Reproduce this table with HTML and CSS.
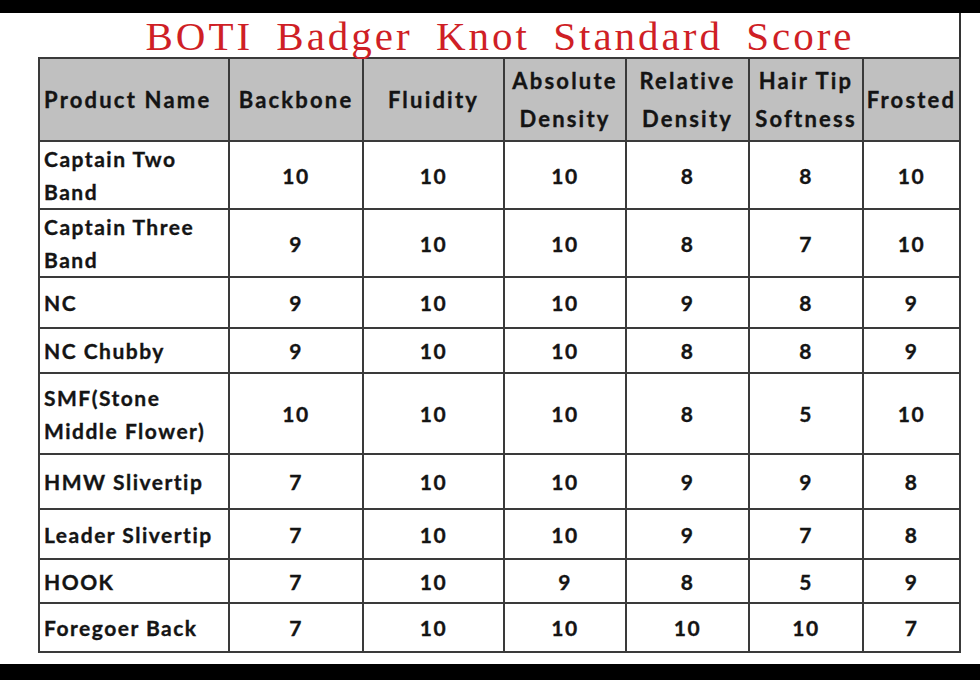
FILE: index.html
```html
<!DOCTYPE html>
<html>
<head>
<meta charset="utf-8">
<link rel="stylesheet" href="styles.css">
</head>
<body>
<div class="topbar"></div>
<div class="sheet">
  <div class="title"><span class="title-text">BOTI Badger Knot Standard Score</span></div>
  <table class="score">
    <colgroup>
      <col class="c-name"><col class="c-back"><col class="c-flu"><col class="c-abs"><col class="c-rel"><col class="c-hair"><col class="c-fro">
    </colgroup>
    <thead>
      <tr class="r-head">
        <th class="name">Product Name</th>
        <th>Backbone</th>
        <th>Fluidity</th>
        <th class="two">Absolute<br>Density</th>
        <th class="two">Relative<br>Density</th>
        <th class="two">Hair Tip<br>Softness</th>
        <th>Frosted</th>
      </tr>
    </thead>
    <tbody>
      <tr class="r68"><td class="name two">Captain Two<br>Band</td><td>10</td><td>10</td><td>10</td><td>8</td><td>8</td><td>10</td></tr>
      <tr class="r68"><td class="name two">Captain Three<br>Band</td><td>9</td><td>10</td><td>10</td><td>8</td><td>7</td><td>10</td></tr>
      <tr class="r51"><td class="name">NC</td><td>9</td><td>10</td><td>10</td><td>9</td><td>8</td><td>9</td></tr>
      <tr class="r45"><td class="name">NC Chubby</td><td>9</td><td>10</td><td>10</td><td>8</td><td>8</td><td>9</td></tr>
      <tr class="r81"><td class="name two">SMF(Stone<br>Middle Flower)</td><td>10</td><td>10</td><td>10</td><td>8</td><td>5</td><td>10</td></tr>
      <tr class="r55"><td class="name">HMW Slivertip</td><td>7</td><td>10</td><td>10</td><td>9</td><td>9</td><td>8</td></tr>
      <tr class="r50"><td class="name">Leader Slivertip</td><td>7</td><td>10</td><td>10</td><td>9</td><td>7</td><td>8</td></tr>
      <tr class="r44"><td class="name">HOOK</td><td>7</td><td>10</td><td>9</td><td>8</td><td>5</td><td>9</td></tr>
      <tr class="r49"><td class="name">Foregoer Back</td><td>7</td><td>10</td><td>10</td><td>10</td><td>10</td><td>7</td></tr>
    </tbody>
  </table>
</div>
<div class="bottombar"></div>
</body>
</html>
```

FILE: styles.css
```css
html, body {
  margin: 0;
  padding: 0;
  background: #ffffff;
  width: 980px;
  height: 680px;
  overflow: hidden;
}
body {
  display: flex;
  flex-direction: column;
}
.topbar {
  height: 13px;
  background: #000;
  flex: none;
}
.bottombar {
  height: 16px;
  background: #000;
  flex: none;
  margin-top: auto;
}
.sheet {
  padding-left: 38px;
  flex: none;
}
.title {
  box-sizing: border-box;
  width: 923px;
  height: 44px;
  padding-left: 3px;
  border-right: 2px solid #333;
  text-align: center;
  font-family: "Liberation Serif", serif;
  font-size: 41px;
  line-height: 46px;
  color: #cf1f26;
  white-space: nowrap;
}
.title-text {
  letter-spacing: 3px;
  word-spacing: 10px;
}
.score {
  border-collapse: collapse;
  table-layout: fixed;
  width: 923px;
  font-family: Lato, "Open Sans", sans-serif;
  font-weight: 700;
  font-size: 21px;
  letter-spacing: 1.5px;
  color: #141414;
  -webkit-text-stroke: 0.35px #141414;
}
.score th, .score td {
  border: 2px solid #3a3a3a;
  padding: 0;
  text-align: center;
  vertical-align: middle;
  white-space: nowrap;
}
.score th {
  background: #c0c0c0;
  font-weight: 700;
  font-size: 22px;
  letter-spacing: 2.2px;
}
.score th.two {
  line-height: 38px;
}
.score td.two {
  line-height: 33px;
}
.score .name {
  text-align: left;
  padding-left: 4px;
}
.c-name { width: 190px; }
.c-back { width: 134px; }
.c-flu { width: 141px; }
.c-abs { width: 122px; }
.c-rel { width: 123px; }
.c-hair { width: 114px; }
.c-fro { width: 97px; }
.r-head { height: 83px; }
.r68 { height: 68px; }
.r51 { height: 51px; }
.r45 { height: 45px; }
.r81 { height: 81px; }
.r55 { height: 55px; }
.r50 { height: 50px; }
.r44 { height: 44px; }
.r49 { height: 49px; }
```
